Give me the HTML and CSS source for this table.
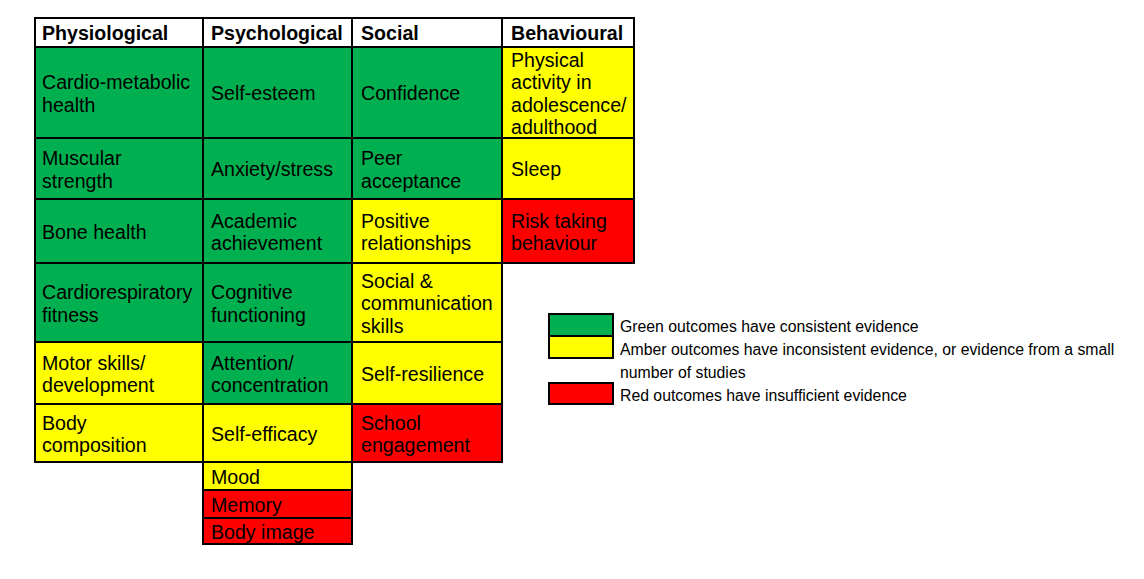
FILE: index.html
```html
<!DOCTYPE html>
<html lang="en">
<head>
<meta charset="utf-8">
<title>Outcomes evidence</title>
<link rel="stylesheet" href="styles.css">
</head>
<body>
<div class="page">
  <div class="matrix">
    <div class="cell head c1 r0">Physiological</div>
    <div class="cell head c2 r0">Psychological</div>
    <div class="cell head c3 r0">Social</div>
    <div class="cell head c4 r0">Behavioural</div>

    <div class="cell g c1 r1">Cardio-metabolic<br>health</div>
    <div class="cell g c2 r1">Self-esteem</div>
    <div class="cell g c3 r1">Confidence</div>
    <div class="cell y c4 r1">Physical<br>activity in<br>adolescence/<br>adulthood</div>

    <div class="cell g c1 r2">Muscular<br>strength</div>
    <div class="cell g c2 r2">Anxiety/stress</div>
    <div class="cell g c3 r2">Peer<br>acceptance</div>
    <div class="cell y c4 r2">Sleep</div>

    <div class="cell g c1 r3">Bone health</div>
    <div class="cell g c2 r3">Academic<br>achievement</div>
    <div class="cell y c3 r3">Positive<br>relationships</div>
    <div class="cell r c4 r3">Risk taking<br>behaviour</div>

    <div class="cell g c1 r4">Cardiorespiratory<br>fitness</div>
    <div class="cell g c2 r4">Cognitive<br>functioning</div>
    <div class="cell y c3 r4">Social &amp;<br>communication<br>skills</div>

    <div class="cell y c1 r5">Motor skills/<br>development</div>
    <div class="cell g c2 r5">Attention/<br>concentration</div>
    <div class="cell y c3 r5">Self-resilience</div>

    <div class="cell y c1 r6">Body<br>composition</div>
    <div class="cell y c2 r6">Self-efficacy</div>
    <div class="cell r c3 r6">School<br>engagement</div>

    <div class="cell y c2 r7">Mood</div>
    <div class="cell r c2 r8">Memory</div>
    <div class="cell r c2 r9">Body image</div>

    <div class="legend">
      <div class="swatches">
        <div class="swatch sw-green"></div>
        <div class="swatch sw-yellow"></div>
        <div class="swatch sw-red"></div>
      </div>
      <div class="legend-text">
        <p>Green outcomes have consistent evidence</p>
        <p>Amber outcomes have inconsistent evidence, or evidence from a small number of studies</p>
        <p>Red outcomes have insufficient evidence</p>
      </div>
    </div>
  </div>
</div>
</body>
</html>
```
FILE: styles.css
```css
html, body {
  margin: 0;
  padding: 0;
  background: #ffffff;
}

body {
  font-family: "Liberation Sans", Arial, sans-serif;
  color: #000;
  min-height: 579px;
}

.page {
  padding: 17px 0 34px 34px;
}

.matrix {
  display: grid;
  grid-template-columns: 168px 149px 150px 132px minmax(0, 1fr);
  grid-template-rows: 29px 91px 61px 64px 79px 62px 58px 28px 28px 28px;
}

.cell {
  box-sizing: border-box;
  border: 2px solid #000;
  margin: 0 -2px -2px 0;
  padding: 2px 4px 0 6px;
  display: flex;
  flex-direction: column;
  justify-content: center;
  font-size: 19.6px;
  line-height: 22.3px;
}

.head {
  background: #fff;
  font-weight: bold;
}

.g { background: #00b050; }
.y { background: #ffff00; }
.r { background: #ff0000; }

.c1 { grid-column: 1; }
.c2 { grid-column: 2; padding-left: 7px; }
.c3 { grid-column: 3; padding-left: 8px; }
.c4 { grid-column: 4; padding-left: 8px; }

.r0 { grid-row: 1; }
.r1 { grid-row: 2; }
.r2 { grid-row: 3; }
.r3 { grid-row: 4; }
.r4 { grid-row: 5; }
.r5 { grid-row: 6; }
.r6 { grid-row: 7; }
.r7 { grid-row: 8; }
.r8 { grid-row: 9; }
.r9 { grid-row: 10; margin-bottom: 0; }

.legend {
  grid-column: 4 / 6;
  grid-row: 5 / 8;
  align-self: start;
  margin: 51px 0 0 47px;
  display: flex;
  gap: 6px;
}

.swatches {
  display: flex;
  flex-direction: column;
  width: 66px;
  flex: none;
}

.swatch {
  box-sizing: border-box;
  border: 2px solid #000;
  width: 66px;
}

.sw-green {
  background: #00b050;
  height: 24px;
}

.sw-yellow {
  background: #ffff00;
  height: 22px;
  border-top: 0;
}

.sw-red {
  background: #ff0000;
  height: 23px;
  margin-top: 23px;
}

.legend-text {
  width: 505px;
  padding-top: 1.5px;
  font-size: 15.8px;
  line-height: 23.3px;
}

.legend-text p {
  margin: 0;
}
```
